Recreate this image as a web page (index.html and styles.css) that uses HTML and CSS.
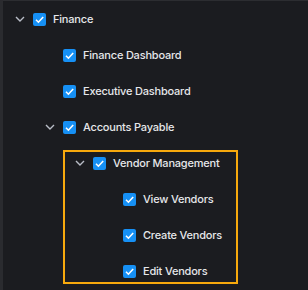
FILE: index.html
```html
<!DOCTYPE html>
<html>
<head>
    <meta charset="utf-8" />
    <title>Permissions tree</title>
    <link rel="stylesheet" href="styles.css">
</head>
<body>
    <div class="tree">
        <div class="row l0">
            <span class="caret"><svg width="10" height="6" viewBox="0 0 10 6"><path d="M1 1l4 4 4-4" fill="none" stroke="#b9bdc7" stroke-width="1.4"/></svg></span>
            <span class="box"><svg width="13" height="13" viewBox="0 0 13 13"><path d="M3 6.8l2.4 2.4L10.2 4" fill="none" stroke="#fff" stroke-width="1.6"/></svg></span>
            <span class="label">Finance</span>
        </div>
        <div class="row l1">
            <span class="caret"></span>
            <span class="box"><svg width="13" height="13" viewBox="0 0 13 13"><path d="M3 6.8l2.4 2.4L10.2 4" fill="none" stroke="#fff" stroke-width="1.6"/></svg></span>
            <span class="label">Finance Dashboard</span>
        </div>
        <div class="row l1">
            <span class="caret"></span>
            <span class="box"><svg width="13" height="13" viewBox="0 0 13 13"><path d="M3 6.8l2.4 2.4L10.2 4" fill="none" stroke="#fff" stroke-width="1.6"/></svg></span>
            <span class="label">Executive Dashboard</span>
        </div>
        <div class="row l1">
            <span class="caret"><svg width="10" height="6" viewBox="0 0 10 6"><path d="M1 1l4 4 4-4" fill="none" stroke="#b9bdc7" stroke-width="1.4"/></svg></span>
            <span class="box"><svg width="13" height="13" viewBox="0 0 13 13"><path d="M3 6.8l2.4 2.4L10.2 4" fill="none" stroke="#fff" stroke-width="1.6"/></svg></span>
            <span class="label">Accounts Payable</span>
        </div>
        <div class="group">
            <div class="row l2">
                <span class="caret"><svg width="10" height="6" viewBox="0 0 10 6"><path d="M1 1l4 4 4-4" fill="none" stroke="#b9bdc7" stroke-width="1.4"/></svg></span>
                <span class="box"><svg width="13" height="13" viewBox="0 0 13 13"><path d="M3 6.8l2.4 2.4L10.2 4" fill="none" stroke="#fff" stroke-width="1.6"/></svg></span>
                <span class="label">Vendor Management</span>
            </div>
            <div class="row l3">
                <span class="caret"></span>
                <span class="box"><svg width="13" height="13" viewBox="0 0 13 13"><path d="M3 6.8l2.4 2.4L10.2 4" fill="none" stroke="#fff" stroke-width="1.6"/></svg></span>
                <span class="label">View Vendors</span>
            </div>
            <div class="row l3">
                <span class="caret"></span>
                <span class="box"><svg width="13" height="13" viewBox="0 0 13 13"><path d="M3 6.8l2.4 2.4L10.2 4" fill="none" stroke="#fff" stroke-width="1.6"/></svg></span>
                <span class="label">Create Vendors</span>
            </div>
            <div class="row l3">
                <span class="caret"></span>
                <span class="box"><svg width="13" height="13" viewBox="0 0 13 13"><path d="M3 6.8l2.4 2.4L10.2 4" fill="none" stroke="#fff" stroke-width="1.6"/></svg></span>
                <span class="label">Edit Vendors</span>
            </div>
        </div>
    </div>
</body>
</html>
```
FILE: styles.css
```css
html, body {
    height: 100%;
}

body {
    margin: 0;
    background-color: #1b1c20;
    border-top: 1px solid #2c2d31;
    border-left: 3px solid #2a2b2f;
    box-sizing: border-box;
    font-family: Inter, "Noto Sans", sans-serif;
    font-size: 11px;
    font-weight: 500;
    letter-spacing: -0.2px;
    color: #e6e7ea;
    overflow: hidden;
}

.tree {
    display: flex;
    flex-direction: column;
    gap: 14px;
    padding-top: 7px;
}

.row {
    display: flex;
    align-items: center;
    height: 22px;
}

.l0 { padding-left: 9px; }
.l1 { padding-left: 39px; }
.l2 { padding-left: 69px; }
.l3 { padding-left: 99px; }

.caret {
    width: 16px;
    height: 16px;
    margin-right: 5px;
    display: flex;
    align-items: center;
    justify-content: center;
}

.box {
    width: 13px;
    height: 13px;
    border-radius: 2px;
    background-color: #1690f5;
    margin-right: 7px;
    display: flex;
}

.label {
    white-space: nowrap;
}

.group {
    display: flex;
    flex-direction: column;
    gap: 14px;
    margin-top: -2px;
    margin-left: 60px;
    width: 175px;
    box-sizing: border-box;
    border: 2px solid #f7a90d;
}

    .group .l2 { padding-left: 7px; }
    .group .l3 { padding-left: 37px; }
```
